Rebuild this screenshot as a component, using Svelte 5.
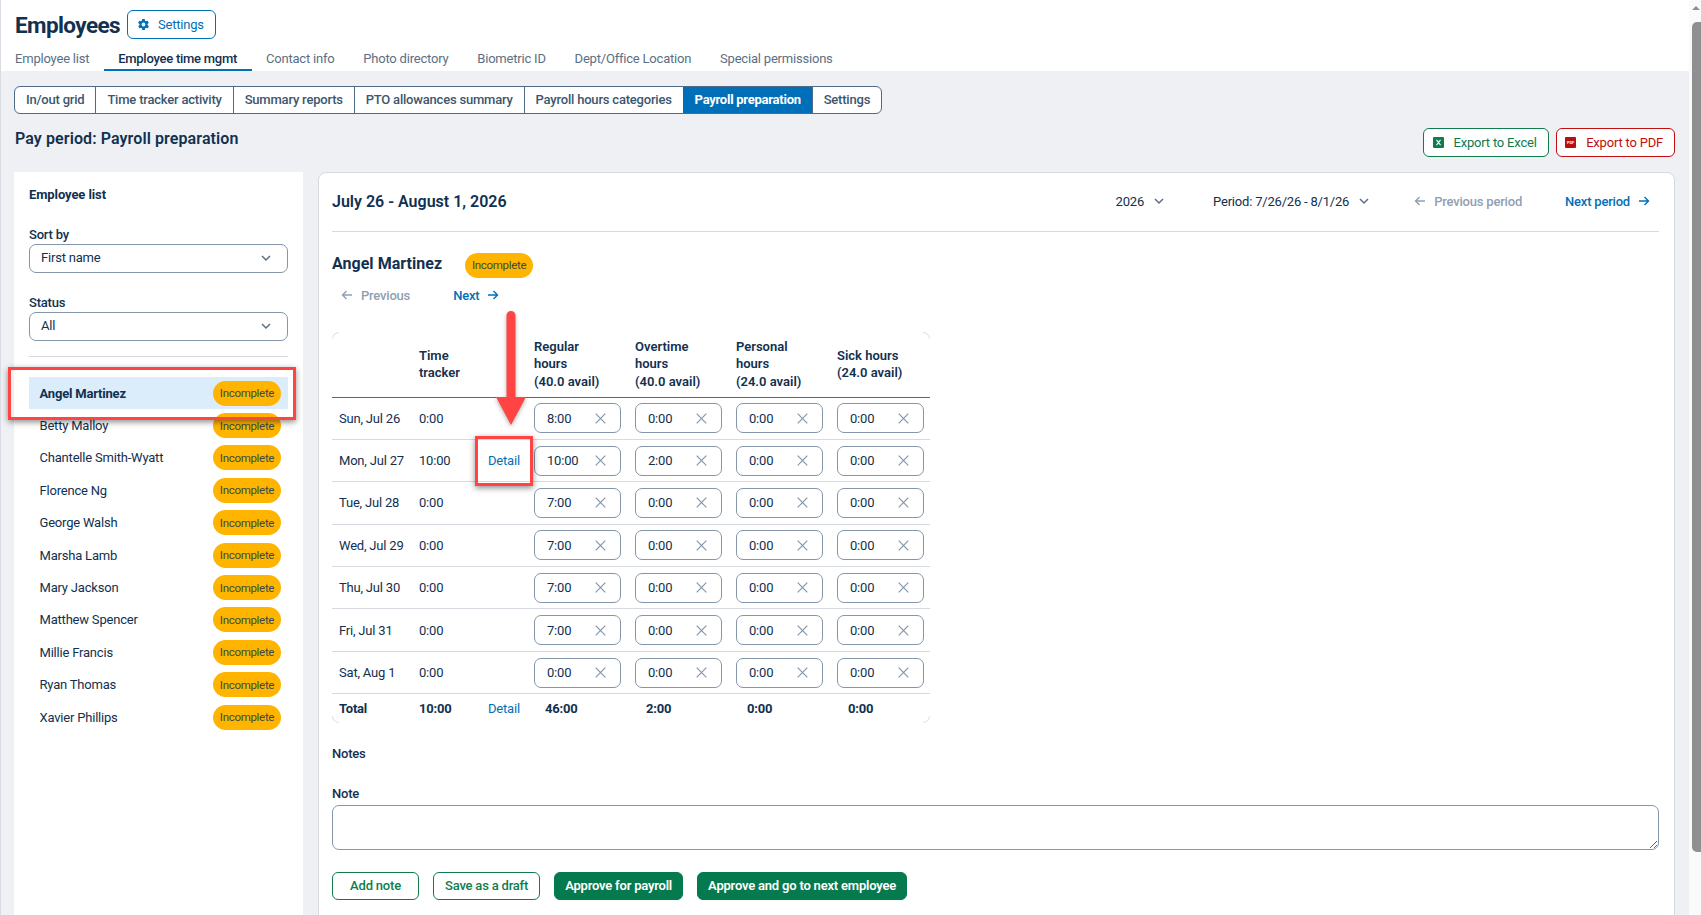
<script>
  const tabs = ['Employee list', 'Employee time mgmt', 'Contact info', 'Photo directory', 'Biometric ID', 'Dept/Office Location', 'Special permissions'];
  const subtabs = ['In/out grid', 'Time tracker activity', 'Summary reports', 'PTO allowances summary', 'Payroll hours categories', 'Payroll preparation', 'Settings'];
  const employees = ['Angel Martinez', 'Betty Malloy', 'Chantelle Smith-Wyatt', 'Florence Ng', 'George Walsh', 'Marsha Lamb', 'Mary Jackson', 'Matthew Spencer', 'Millie Francis', 'Ryan Thomas', 'Xavier Phillips'];
  const days = [
    { day: 'Sun, Jul 26', tracker: '0:00', hours: ['8:00', '0:00', '0:00', '0:00'] },
    { day: 'Mon, Jul 27', tracker: '10:00', detail: true, hours: ['10:00', '2:00', '0:00', '0:00'] },
    { day: 'Tue, Jul 28', tracker: '0:00', hours: ['7:00', '0:00', '0:00', '0:00'] },
    { day: 'Wed, Jul 29', tracker: '0:00', hours: ['7:00', '0:00', '0:00', '0:00'] },
    { day: 'Thu, Jul 30', tracker: '0:00', hours: ['7:00', '0:00', '0:00', '0:00'] },
    { day: 'Fri, Jul 31', tracker: '0:00', hours: ['7:00', '0:00', '0:00', '0:00'] },
    { day: 'Sat, Aug 1', tracker: '0:00', hours: ['0:00', '0:00', '0:00', '0:00'] }
  ];
  const totals = ['46:00', '2:00', '0:00', '0:00'];
</script>

{#snippet chevron()}
  <svg class="chev" width="12" height="12" viewBox="0 0 12 12"><path d="M2 4l4 4 4-4" fill="none" stroke="currentColor" stroke-width="1.5" /></svg>
{/snippet}

{#snippet arrow(left)}
  <svg class="arrow" width="12" height="12" viewBox="0 0 12 12">
    {#if left}
      <path d="M11 6H1.5M5.5 2L1.5 6l4 4" fill="none" stroke="currentColor" stroke-width="1.4" />
    {:else}
      <path d="M1 6h9.5M6.5 2l4 4-4 4" fill="none" stroke="currentColor" stroke-width="1.4" />
    {/if}
  </svg>
{/snippet}

<div class="screen">
  <div class="page">
    <header class="top">
      <div class="title-row">
        <h1>Employees</h1>
        <button class="settings">
          <svg width="13" height="13" viewBox="0 0 24 24"><path fill="currentColor" d="M19.4 13a7.6 7.6 0 0 0 0-2l2.1-1.6a.5.5 0 0 0 .1-.6l-2-3.5a.5.5 0 0 0-.6-.2l-2.5 1a7.3 7.3 0 0 0-1.7-1l-.4-2.7a.5.5 0 0 0-.5-.4h-4a.5.5 0 0 0-.5.4l-.4 2.7a7.3 7.3 0 0 0-1.7 1l-2.5-1a.5.5 0 0 0-.6.2l-2 3.5a.5.5 0 0 0 .1.6L4.6 11a7.6 7.6 0 0 0 0 2l-2.1 1.6a.5.5 0 0 0-.1.6l2 3.5c.1.2.4.3.6.2l2.5-1c.5.4 1.1.7 1.7 1l.4 2.7c0 .2.2.4.5.4h4c.3 0 .5-.2.5-.4l.4-2.7c.6-.3 1.2-.6 1.7-1l2.5 1c.2.1.5 0 .6-.2l2-3.5a.5.5 0 0 0-.1-.6zM12 15.5a3.5 3.5 0 1 1 0-7 3.5 3.5 0 0 1 0 7z" /></svg>
          Settings
        </button>
      </div>
      <nav class="tabs">
        {#each tabs as t, i}
          <span class="tab" class:on={i === 1}>{t}</span>
        {/each}
      </nav>
    </header>

    <div class="body">
      <div class="subtabs">
        {#each subtabs as t, i}
          <span class="subtab" class:on={i === 5}>{t}</span>
        {/each}
      </div>

      <div class="pp-row">
        <h2>Pay period: Payroll preparation</h2>
        <div class="exports">
          <button class="export xl">
            <svg width="11" height="11" viewBox="0 0 11 11"><rect width="11" height="11" rx="1" fill="#107c4d" /><path d="M3.5 2.800l4 5.400M7.500 2.800l-4 5.400" stroke="#fff" stroke-width="1.1" /></svg>
            Export to Excel
          </button>
          <button class="export pdf">
            <svg width="11" height="11" viewBox="0 0 11 11"><rect width="11" height="11" rx="1" fill="#b90f0f" /><text x="5.500" y="7" font-size="3.800" font-weight="700" text-anchor="middle" fill="#fff" letter-spacing="0">PDF</text></svg>
            Export to PDF
          </button>
        </div>
      </div>

      <div class="columns">
        <aside class="side">
          <div class="side-title">Employee list</div>
          <label class="lbl sort" for="sort">Sort by</label>
          <div class="select" id="sort">First name {@render chevron()}</div>
          <label class="lbl status" for="status">Status</label>
          <div class="select" id="status">All {@render chevron()}</div>
          <hr />
          <ul>
            {#each employees as e, i}
              <li class:sel={i === 0}>
                <span>{e}</span>
                <span class="badge">Incomplete</span>
              </li>
            {/each}
          </ul>
        </aside>

        <main class="card">
          <div class="card-head">
            <h3>July 26 - August 1, 2026</h3>
            <span class="pick year">2026 {@render chevron()}</span>
            <span class="pick period">Period: 7/26/26 - 8/1/26 {@render chevron()}</span>
            <span class="nav off prevp">{@render arrow(true)} Previous period</span>
            <span class="nav nextp">Next period {@render arrow(false)}</span>
          </div>

          <div class="who">
            <h4>Angel Martinez</h4>
            <span class="badge big">Incomplete</span>
          </div>
          <div class="who-nav">
            <span class="nav off">{@render arrow(true)} Previous</span>
            <span class="nav">Next {@render arrow(false)}</span>
          </div>

          <div class="table-wrap">
            <i class="corner tl"></i><i class="corner tr"></i><i class="corner bl"></i><i class="corner br"></i>
            <table>
              <colgroup>
                <col style="width:80px" /><col style="width:69px" /><col style="width:46px" />
                <col style="width:101px" /><col style="width:101px" /><col style="width:101px" /><col style="width:100px" />
              </colgroup>
              <thead>
                <tr>
                  <th></th>
                  <th>Time<br />tracker</th>
                  <th></th>
                  <th>Regular<br />hours<br />(40.0 avail)</th>
                  <th>Overtime<br />hours<br />(40.0 avail)</th>
                  <th>Personal<br />hours<br />(24.0 avail)</th>
                  <th>Sick hours<br />(24.0 avail)</th>
                </tr>
              </thead>
              <tbody>
                {#each days as d}
                  <tr>
                    <td>{d.day}</td>
                    <td>{d.tracker}</td>
                    <td>{#if d.detail}<span class="link">Detail</span>{/if}</td>
                    {#each d.hours as h}
                      <td>
                        <div class="hour">
                          <input value={h} />
                          <svg width="11" height="11" viewBox="0 0 11 11"><path d="M.7.7l9.6 9.6M10.300.7L.7 10.300" stroke="#8496aa" stroke-width="1.2" /></svg>
                        </div>
                      </td>
                    {/each}
                  </tr>
                {/each}
              </tbody>
              <tfoot>
                <tr>
                  <td>Total</td>
                  <td>10:00</td>
                  <td><span class="link">Detail</span></td>
                  {#each totals as t}
                    <td class="tot">{t}</td>
                  {/each}
                </tr>
              </tfoot>
            </table>
          </div>

          <div class="notes">Notes</div>
          <label class="note-lbl" for="note">Note</label>
          <textarea id="note"></textarea>

          <div class="actions">
            <button class="ghost addn">Add note</button>
            <button class="ghost">Save as a draft</button>
            <button class="solid">Approve for payroll</button>
            <button class="solid">Approve and go to next employee</button>
          </div>
        </main>
      </div>
    </div>
  </div>

  <div class="scrollbar">
    <svg width="12" height="8" viewBox="0 0 12 8"><path d="M6 2l4 4H2z" fill="#8f8f8f" /></svg>
    <div class="thumb"></div>
  </div>

  <!-- annotations drawn over the screenshot -->
  <div class="mark mark-row"></div>
  <div class="mark mark-detail"></div>
  <svg class="red-arrow" width="40" height="124" viewBox="0 0 40 124">
    <path d="M15.500 7.500a4.500 4.500 0 0 1 9 0V89H35L20 117 5 89h10.500z" fill="#ff4444" />
  </svg>
</div>

<style>
  :global(body) {
    margin: 0;
    background: #fff;
  }
  * {
    box-sizing: border-box;
  }
  .screen {
    position: relative;
    display: flex;
    width: 1701px;
    height: 915px;
    overflow: hidden;
    font-family: Roboto, 'Liberation Sans', sans-serif;
    font-size: 13px;
    letter-spacing: -0.2px;
    color: #12304f;
  }
  .page {
    width: 1689px;
    border-left: 1px solid #d9dce3;
    display: flex;
    flex-direction: column;
  }
  .scrollbar {
    width: 12px;
    background: #fafafa;
    display: flex;
    flex-direction: column;
    align-items: flex-end;
    padding-top: 4px;
  }
  .scrollbar svg {
    margin-right: -1px;
  }
  .thumb {
    width: 9px;
    height: 830px;
    margin-top: 10px;
    background: #8f8f8f;
    border-radius: 5px 0 0 5px;
  }
  .top {
    height: 71px;
    flex: none;
    background: #fff;
  }
  .title-row {
    display: flex;
    align-items: center;
    gap: 7px;
    padding: 10px 0 0 14px;
    height: 39px;
  }
  h1 {
    margin: 0;
    font-size: 22.500px;
    font-weight: 700;
    letter-spacing: -0.6px;
  }
  .settings {
    display: inline-flex;
    align-items: center;
    gap: 8px;
    height: 29px;
    width: 89px;
    padding: 0 0 0 9px;
    border: 1px solid #0070b8;
    border-radius: 6px;
    background: #fff;
    color: #0070b8;
    font: inherit;
    letter-spacing: inherit;
  }
  .tabs {
    display: flex;
    padding-top: 7px;
    height: 32px;
    color: #5b6f85;
  }
  .tab {
    height: 25px;
    line-height: 26px;
    padding: 0 14.400px;
  }
  .tab:first-child {
    padding-left: 14px;
  }
  .tab.on {
    color: #12304f;
    font-weight: 500;
    letter-spacing: -0.25px;
    border-bottom: 2px solid #0070b8;
  }
  .body {
    flex: 1;
    min-height: 0;
    background: #eef0f4;
    padding: 15px 14px 0 13px;
  }
  .subtabs {
    display: inline-flex;
    height: 28px;
    border: 1px solid #4f6a85;
    border-radius: 6px;
    overflow: hidden;
    background: #fff;
    vertical-align: top;
    color: #3c566f;
  }
  .subtab {
    padding: 0 10.950px;
    line-height: 25px;
    border-left: 1px solid #4f6a85;
    font-weight: 500;
  }
  .subtab:first-child {
    border-left: 0;
  }
  .subtab.on {
    background: #006fba;
    color: #fff;
    border-color: #006fba;
    font-weight: 700;
    letter-spacing: -0.25px;
  }
  .pp-row {
    display: flex;
    justify-content: space-between;
    align-items: flex-start;
    padding-top: 15px;
    height: 58px;
  }
  h2 {
    margin: 0;
    padding-left: 1px;
    font-size: 16px;
    font-weight: 600;
    line-height: 20px;
    letter-spacing: 0.1px;
  }
  .exports {
    display: flex;
    gap: 7px;
    margin-top: -1px;
  }
  .export {
    display: inline-flex;
    align-items: center;
    gap: 10px;
    height: 29px;
    padding: 0 11px 0 8.500px;
    border-radius: 6px;
    background: #fff;
    font: inherit;
    letter-spacing: inherit;
  }
  .xl {
    border: 1px solid #107c4d;
    color: #107c4d;
  }
  .pdf {
    border: 1px solid #c00d0d;
    color: #c00d0d;
  }
  .columns {
    display: flex;
    gap: 15px;
  }
  .side {
    width: 289px;
    height: 760px;
    background: #fff;
    padding: 14px 15px;
    flex: none;
  }
  .side-title {
    font-weight: 700;
    line-height: 18px;
    letter-spacing: -0.1px;
  }
  .lbl {
    display: block;
    line-height: 18px;
    font-weight: 500;
  }
  .sort {
    margin-top: 22px;
  }
  .status {
    margin-top: 21px;
  }
  .select {
    display: flex;
    justify-content: space-between;
    align-items: center;
    height: 29px;
    padding: 0 15px 2px 11px;
    border: 1px solid #8496aa;
    border-radius: 7px;
    color: #12304f;
  }
  .chev {
    color: #5b6f85;
  }
  hr {
    border: 0;
    border-top: 1px solid #d5d9e0;
    margin: 15px 0 20px;
  }
  ul {
    list-style: none;
    margin: 0;
    padding: 0;
  }
  li {
    display: flex;
    justify-content: space-between;
    align-items: center;
    height: 32.400px;
    padding: 0 7px 0 10.500px;
  }
  li.sel {
    background: #dbecfa;
    font-weight: 700;
  }
  .badge {
    display: inline-flex;
    align-items: center;
    justify-content: center;
    width: 68px;
    height: 25px;
    border-radius: 13px;
    background: #ffb400;
    font-size: 11.500px;
    font-weight: 400;
    letter-spacing: -0.3px;
    color: #3a4a46;
  }
  .card {
    width: 1357px;
    height: 760px;
    background: #fff;
    border: 1px solid #d5d9e0;
    border-radius: 8px 8px 0 0;
    padding: 0 15px 0 13px;
  }
  .card-head {
    display: flex;
    align-items: center;
    height: 59px;
    padding-bottom: 2px;
    border-bottom: 1px solid #d5d9e0;
  }
  h3 {
    margin: 0;
    font-size: 16px;
    font-weight: 600;
    letter-spacing: 0;
  }
  .pick {
    display: inline-flex;
    align-items: center;
    gap: 9px;
  }
  .year {
    margin-left: auto;
  }
  .period {
    margin-left: 48px;
  }
  .nav {
    display: inline-flex;
    align-items: center;
    gap: 8px;
    color: #0070b8;
    font-weight: 500;
  }
  .nav.off {
    color: #8fa0b2;
  }
  .prevp {
    margin-left: 44px;
  }
  .nextp {
    margin-left: 43px;
    margin-right: 9px;
  }
  .who {
    display: flex;
    align-items: center;
    gap: 23px;
    margin-top: 20px;
    height: 26px;
  }
  h4 {
    margin: 0 0 4px;
    font-size: 16px;
    font-weight: 700;
    letter-spacing: 0.03px;
  }
  .big {
    height: 25px;
  }
  .who-nav {
    display: flex;
    gap: 43px;
    margin-top: 4px;
    padding-left: 9px;
    height: 26px;
    align-items: center;
  }
  .table-wrap {
    position: relative;
    width: 598px;
    margin-top: 24px;
  }
  .corner {
    position: absolute;
    width: 7px;
    height: 7px;
    border: 0 solid #dfe3e8;
  }
  .tl {
    left: 0;
    top: 0;
    border-width: 1px 0 0 1px;
    border-radius: 7px 0 0 0;
  }
  .tr {
    right: 0;
    top: 0;
    border-width: 1px 1px 0 0;
    border-radius: 0 7px 0 0;
  }
  .bl {
    left: 0;
    bottom: 0;
    border-width: 0 0 1px 1px;
    border-radius: 0 0 0 7px;
  }
  .br {
    right: 0;
    bottom: 0;
    border-width: 0 1px 1px 0;
    border-radius: 0 0 7px 0;
  }
  table {
    width: 598px;
    table-layout: fixed;
    border-collapse: collapse;
    border-spacing: 0;
  }
  th {
    height: 65px;
    padding: 0 7px;
    text-align: left;
    font-weight: 600;
    line-height: 17.700px;
    letter-spacing: 0;
    vertical-align: middle;
  }
  thead tr {
    border-bottom: 1px solid #4f6a85;
  }
  tbody tr {
    height: 42.400px;
    border-bottom: 1px solid #d5d9e0;
  }
  td {
    padding: 0 7px;
    white-space: nowrap;
  }
  tfoot td {
    height: 29px;
    font-weight: 700;
  }
  tfoot .link {
    font-weight: 400;
  }
  .tot {
    padding-left: 18px;
  }
  .link {
    color: #0070b8;
  }
  .hour {
    display: flex;
    align-items: center;
    justify-content: space-between;
    width: 87px;
    height: 30px;
    padding: 0 14px 0 12px;
    border: 1px solid #8496aa;
    border-radius: 7px;
  }
  .hour input {
    width: 44px;
    padding: 0;
    border: 0;
    outline: 0;
    background: none;
    font: inherit;
    letter-spacing: inherit;
    color: #12304f;
  }
  .notes {
    margin-top: 22px;
    line-height: 18px;
    font-weight: 500;
  }
  .note-lbl {
    display: block;
    margin-top: 22px;
    line-height: 18px;
    font-weight: 500;
  }
  textarea {
    display: block;
    width: 1327px;
    height: 45px;
    margin-top: 2px;
    border: 1px solid #8496aa;
    border-radius: 7px;
    outline: 0;
  }
  .actions {
    display: flex;
    gap: 14px;
    margin-top: 22px;
  }
  .actions button {
    height: 28px;
    padding: 0 11px;
    border-radius: 6px;
    font: inherit;
    letter-spacing: inherit;
    font-weight: 500;
  }
  .ghost {
    border: 1px solid #107c4d;
    background: #fff;
    color: #107c4d;
  }
  .addn {
    width: 87px;
  }
  .actions .solid {
    padding: 0 10px;
    border: 1px solid #057a4e;
    background: #057a4e;
    color: #fff;
    font-weight: 600;
  }
  .mark {
    position: absolute;
    border: 3px solid #ff4444;
    box-shadow: 0 2px 6px rgba(0, 0, 0, 0.45);
  }
  .mark-row {
    left: 8px;
    top: 367px;
    width: 288px;
    height: 53px;
  }
  .mark-detail {
    left: 475px;
    top: 436px;
    width: 58px;
    height: 50px;
  }
  .red-arrow {
    position: absolute;
    left: 491px;
    top: 308px;
    filter: drop-shadow(0 2px 2px rgba(0, 0, 0, 0.3));
  }
</style>
